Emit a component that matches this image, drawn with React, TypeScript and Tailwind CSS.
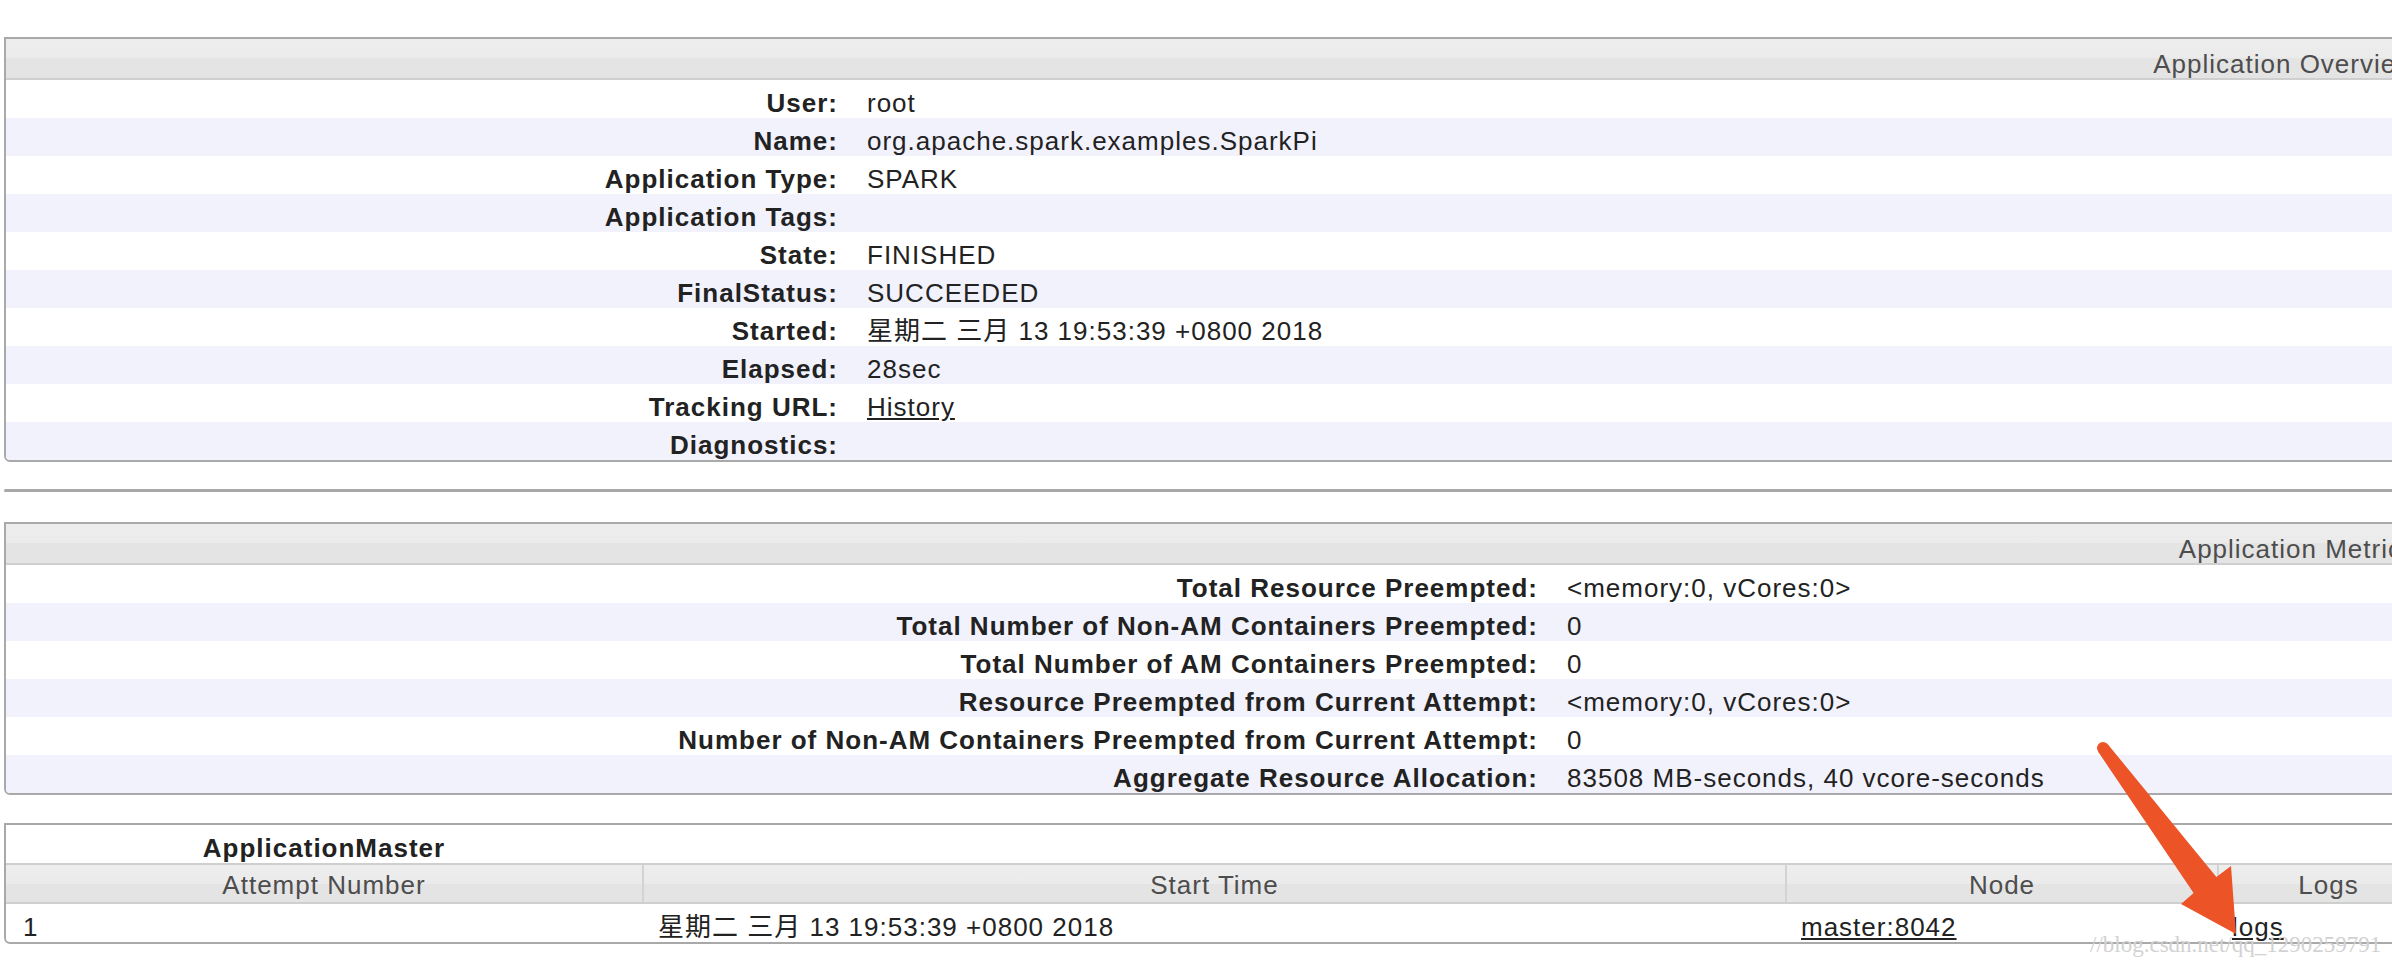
import React from "react";

const overview: [string, React.ReactNode][] = [
  ["User:", "root"],
  ["Name:", "org.apache.spark.examples.SparkPi"],
  ["Application Type:", "SPARK"],
  ["Application Tags:", ""],
  ["State:", "FINISHED"],
  ["FinalStatus:", "SUCCEEDED"],
  ["Started:", "星期二 三月 13 19:53:39 +0800 2018"],
  ["Elapsed:", "28sec"],
  ["Tracking URL:", <a className="underline">History</a>],
  ["Diagnostics:", ""],
];

const metrics: [string, string][] = [
  ["Total Resource Preempted:", "<memory:0, vCores:0>"],
  ["Total Number of Non-AM Containers Preempted:", "0"],
  ["Total Number of AM Containers Preempted:", "0"],
  ["Resource Preempted from Current Attempt:", "<memory:0, vCores:0>"],
  ["Number of Non-AM Containers Preempted from Current Attempt:", "0"],
  ["Aggregate Resource Allocation:", "83508 MB-seconds, 40 vcore-seconds"],
];

const bandClass =
  "h-[41px] border-b-2 border-[#cfcfcf] bg-[linear-gradient(#ededed_0%,#ebebeb_50%,#e4e4e4_50%,#e4e4e4_100%)] pt-[10px] leading-[30px] text-[#4d4d4d]";
const rowClass = "h-[38px] pt-[8px] leading-[30px] whitespace-nowrap";

function InfoPanel({ title, rows, labelWidth }: { title: string; rows: [string, React.ReactNode][]; labelWidth: string }) {
  return (
    <section className="rounded-b-[6px] border-2 border-[#a9a9a9]">
      <div className={`${bandClass} pr-[22px] text-right`}>{title}</div>
      {rows.map(([label, value], i) => (
        <div key={label} className={`grid ${labelWidth} ${i % 2 === 1 ? "bg-[#f2f2fc]" : "bg-white"} ${i === rows.length - 1 ? "rounded-b-[4px]" : ""}`}>
          <div className={`${rowClass} pr-[14px] text-right font-bold`}>{label}</div>
          <div className={`${rowClass} pl-[15px]`}>{value}</div>
        </div>
      ))}
    </section>
  );
}

export default function App() {
  return (
    <div className="relative h-[966px] w-[2392px] overflow-hidden bg-white font-['Liberation_Sans','Noto_Sans_CJK_SC',sans-serif] text-[26px] tracking-[1px] text-[#222]">
      <div className="w-[2440px] pl-[4px] pt-[37px]">
        <InfoPanel title="Application Overview" rows={overview} labelWidth="grid-cols-[846px_1fr]" />

        <div className="mt-[27px] h-[3px] rounded-l-[3px] bg-[#a8a8a8]" />

        <div className="mt-[30px]">
          <InfoPanel title="Application Metrics" rows={metrics} labelWidth="grid-cols-[1546px_1fr]" />
        </div>

        <section className="mt-[28px] rounded-b-[6px] border-2 border-[#a9a9a9]">
          <div className="grid grid-cols-[636px_1143px_432px_1fr]">
            <div className={`${rowClass} text-center font-bold`}>ApplicationMaster</div>
          </div>
          <div className="grid h-[41px] grid-cols-[636px_1143px_432px_1fr] border-y-2 border-[#cfcfcf] bg-[linear-gradient(#ededed_0%,#ebebeb_50%,#e4e4e4_50%,#e4e4e4_100%)] text-center leading-[30px] text-[#4d4d4d]">
            <div className="pt-[5px]">Attempt Number</div>
            <div className="border-l-2 border-[#d3d3d3] pt-[5px]">Start Time</div>
            <div className="border-l-2 border-[#d3d3d3] pt-[5px]">Node</div>
            <div className="border-l-2 border-[#d3d3d3] pt-[5px]">Logs</div>
          </div>
          <div className="grid grid-cols-[636px_1143px_432px_1fr]">
            <div className={`${rowClass} pl-[17px]`}>1</div>
            <div className={`${rowClass} pl-[16px]`}>星期二 三月 13 19:53:39 +0800 2018</div>
            <div className={`${rowClass} pl-[16px]`}>
              <a className="underline">master:8042</a>
            </div>
            <div className={`${rowClass} pl-[15px]`}>
              <a className="underline">logs</a>
            </div>
          </div>
        </section>
      </div>

      <svg className="pointer-events-none absolute left-0 top-0" width="2392" height="966" viewBox="0 0 2392 966">
        <circle cx="2103" cy="748" r="6" fill="#ec5327" />
        <polygon
          points="2098,751.5 2193.6,893.1 2181,904 2236,934 2231,866 2216.4,876.9 2108,744.5"
          fill="#ec5327"
        />
      </svg>

      <div className="pointer-events-none absolute left-[2090px] top-[928px] font-['Liberation_Serif',serif] text-[23px] tracking-normal text-[#d2d2d2]">
        //blog.csdn.net/qq_1290259791
      </div>
    </div>
  );
}
